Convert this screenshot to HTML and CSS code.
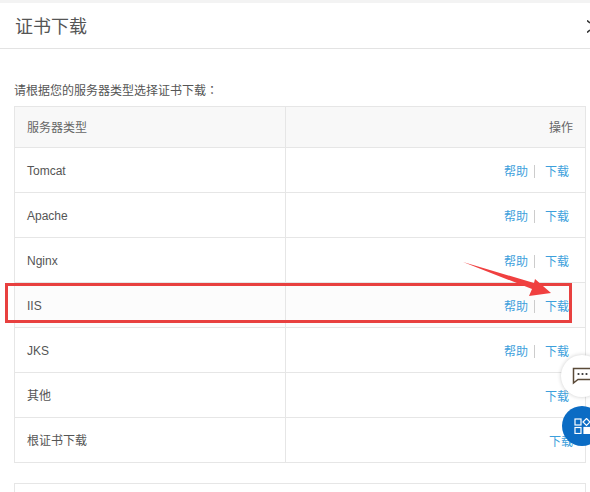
FILE: index.html
```html
<!DOCTYPE html>
<html>
<head>
    <title>证书下载</title>
    <meta charset="utf-8">
    <link rel="stylesheet" href="styles.css">
</head>
<body>
    <div class="dialog-header">
        <h2 class="dialog-title">证书下载</h2>
        <svg class="dialog-close" width="3" height="13" viewBox="0 0 3 13">
            <path d="M0 0.5 L3 3 M0 12.5 L3 10" stroke="#333" stroke-width="1.6" fill="none"/>
        </svg>
    </div>
    <div class="dialog-body">
        <p class="hint">请根据您的服务器类型选择证书下载<span class="colon">：</span></p>
        <table class="cert-table">
            <thead>
                <tr><th>服务器类型</th><th class="op">操作</th></tr>
            </thead>
            <tbody>
                <tr><td class="latin">Tomcat</td><td class="op"><a>帮助</a><i class="sep"></i><a>下载</a></td></tr>
                <tr><td class="latin">Apache</td><td class="op"><a>帮助</a><i class="sep"></i><a>下载</a></td></tr>
                <tr><td class="latin">Nginx</td><td class="op"><a>帮助</a><i class="sep"></i><a>下载</a></td></tr>
                <tr class="shaded"><td class="latin">IIS</td><td class="op"><a>帮助</a><i class="sep"></i><a>下载</a></td></tr>
                <tr><td class="latin">JKS</td><td class="op"><a>帮助</a><i class="sep"></i><a>下载</a></td></tr>
                <tr><td class="cjk">其他</td><td class="op"><a>下载</a></td></tr>
                <tr><td class="cjk">根证书下载</td><td class="op root"><a>下载</a></td></tr>
            </tbody>
        </table>
        <div class="next-box"></div>
    </div>

    <!-- screenshot annotation -->
    <div class="mark-box"></div>
    <svg class="mark-arrow" width="100" height="40" viewBox="0 0 100 40">
        <path d="M2 2 L73 23 L74 19 L90 33 L68 36 L71 29 Z" fill="#f04040"/>
    </svg>

    <div class="float-btn chat">
        <svg width="20" height="18" viewBox="0 0 20 18">
            <path d="M1.5 1.5 H19 V12.5 H6 L1.5 16 Z" fill="#fff" stroke="#5a4a38" stroke-width="1.5"/>
            <circle cx="6.5" cy="7" r="1.1" fill="#333"/>
            <circle cx="10.5" cy="7" r="1.1" fill="#333"/>
            <circle cx="14.5" cy="7" r="1.1" fill="#333"/>
        </svg>
    </div>
    <div class="float-btn apps">
        <svg width="16" height="16" viewBox="0 0 16 16" fill="none" stroke="#fff" stroke-width="1.2">
            <rect x="1" y="1" width="6" height="6"/>
            <path d="M12.5 0.5 L16 4 L12.5 7.5 L9 4 Z"/>
            <rect x="1" y="9.5" width="6" height="6"/>
            <rect x="10" y="9.5" width="6" height="6" fill="#fff"/>
        </svg>
    </div>
</body>
</html>
```

FILE: styles.css
```css
body {
    margin: 0;
    height: 492px;
    overflow: hidden;
    background-color: #fff;
    font-family: "Liberation Sans", "Noto Sans CJK SC", sans-serif;
    font-size: 12px;
    color: #555;
    position: relative;
}

.dialog-header {
    height: 45px;
    border-top: 3px solid #f3f3f3;
    border-bottom: 1px solid #e3e3e3;
    padding-left: 15px;
    display: flex;
    align-items: center;
    justify-content: space-between;
}

.dialog-title {
    margin: 0 0 1px;
    font-size: 18px;
    font-weight: normal;
    color: #555;
}

.dialog-close {
    margin-top: 2px;
}

.dialog-body {
    padding: 0 4px 0 14px;
}

.hint {
    margin: 0;
    padding-top: 32px;
    height: 25px;
    line-height: 17px;
    color: #555;
}

.colon {
    font-family: "Noto Sans CJK TC", sans-serif;
}

.cert-table {
    width: 100%;
    border-collapse: collapse;
    table-layout: fixed;
    border: 1px solid #e6e6e6;
}

.cert-table th,
.cert-table td {
    box-sizing: border-box;
    padding: 0 12px;
    font-weight: normal;
    text-align: left;
    border-bottom: 1px solid #e6e6e6;
}

.cert-table th {
    height: 41px;
    padding-bottom: 2px;
    background-color: #f8f8f8;
    color: #666;
}

.cert-table th:first-child,
.cert-table td:first-child {
    width: 271px;
    border-right: 1px solid #e6e6e6;
}

.cert-table td {
    height: 45px;
}

.cert-table td.latin {
    padding-top: 2px;
}

.cert-table td.cjk {
    padding-bottom: 2px;
}

.cert-table .op {
    text-align: right;
    padding-right: 16px;
}

.cert-table th.op {
    padding-right: 12px;
}

.cert-table .root {
    padding-right: 12px;
}

.cert-table a {
    color: #3d9fdc;
}

.shaded td {
    background-color: #fcfcfc;
}

.sep {
    display: inline-block;
    width: 1px;
    height: 13px;
    margin: 0 10px 0 6px;
    background-color: #ccc;
    vertical-align: -2px;
}

.next-box {
    height: 20px;
    margin-top: 20px;
    border: 1px solid #e6e6e6;
}

.mark-box {
    position: absolute;
    left: 5px;
    top: 283px;
    width: 561px;
    height: 34px;
    border: 3px solid #e8403f;
}

.mark-arrow {
    position: absolute;
    left: 461px;
    top: 260px;
}

.float-btn {
    position: absolute;
    border-radius: 50%;
    display: flex;
    align-items: center;
    justify-content: center;
}

.chat {
    left: 561px;
    top: 355px;
    width: 42px;
    height: 42px;
    background-color: #fff;
    box-shadow: 0 0 4px rgba(0, 0, 0, 0.2);
}

.apps {
    left: 562px;
    top: 406px;
    width: 40px;
    height: 40px;
    background-color: #0b6cc4;
}
```
